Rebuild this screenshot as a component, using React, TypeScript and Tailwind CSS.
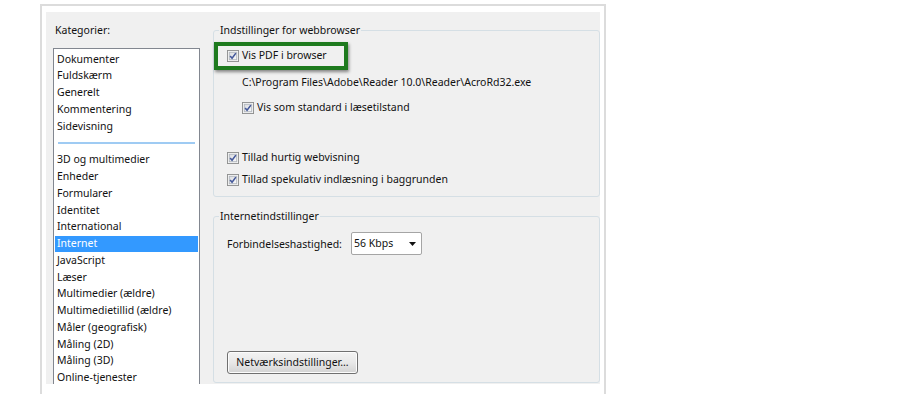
import React from 'react';

const FIRST = ['Dokumenter', 'Fuldskærm', 'Generelt', 'Kommentering', 'Sidevisning'];
const SECOND = [
  '3D og multimedier',
  'Enheder',
  'Formularer',
  'Identitet',
  'International',
  'Internet',
  'JavaScript',
  'Læser',
  'Multimedier (ældre)',
  'Multimedietillid (ældre)',
  'Måler (geografisk)',
  'Måling (2D)',
  'Måling (3D)',
  'Online-tjenester',
];

const Checkbox: React.FC = () => (
  <svg width="12" height="12" viewBox="0 0 13 13" className="shrink-0">
    <defs>
      <linearGradient id="cbfill" x1="0" y1="0" x2="1" y2="1">
        <stop offset="0" stopColor="#d8dade" />
        <stop offset="1" stopColor="#fbfbfb" />
      </linearGradient>
    </defs>
    <rect x="0.5" y="0.5" width="12" height="12" fill="#f5f5f5" stroke="#8e8f8f" />
    <rect x="2.5" y="2.5" width="8" height="8" fill="url(#cbfill)" stroke="#b3b8bf" />
    <path d="M3.4 6.4 L5.5 9 L9.6 3.4" fill="none" stroke="#44589a" strokeWidth="1.7" />
  </svg>
);

const CheckRow: React.FC<{ label: string; indent: string; className?: string }> = ({ label, indent, className }) => (
  <div className={`flex items-center gap-[2px] h-[16px] ${indent} ${className ?? ''}`}>
    <Checkbox />
    <span className="pl-[1px]">{label}</span>
  </div>
);

const App: React.FC = () => {
  return (
    <div className="w-[900px] h-[394px] bg-white overflow-hidden text-[10.5px] text-[#111] font-['Noto_Sans',sans-serif]">
      {/* outer frame */}
      <div className="ml-[40px] mt-[4px] w-[566px] h-[400px] border-t-2 border-x-2 border-[#dcdcdc] pl-[4px] pr-[4px] pt-[6px]">
        <div className="h-[372px] bg-[#f0f0f0] flex overflow-hidden">
          {/* categories */}
          <div className="w-[160px] shrink-0 pl-[7px] pt-[10px]">
            <div className="leading-[16px] h-[16px] pl-[2px]">Kategorier:</div>
            <div className="mt-[10px] w-[147px] h-[350px] bg-white border border-[#828790] pt-[2px]">
              {FIRST.map(item => (
                <div key={item} className="h-[16.75px] flex items-center pl-[3px]">{item}</div>
              ))}
              <div className="h-[17.2px] flex items-center px-[4px]">
                <div className="h-[2px] w-full bg-[#9fcbf3]" />
              </div>
              {SECOND.map(item => (
                <div
                  key={item}
                  className={`h-[16.75px] flex items-center ${
                    item === 'Internet' ? 'bg-[#3399ff] text-white mx-[1px] pl-[2px]' : 'pl-[3px]'
                  }`}
                >
                  {item}
                </div>
              ))}
            </div>
          </div>

          {/* settings */}
          <div className="flex-1 flex flex-col pl-[7px]">
            <fieldset className="mt-[10px] h-[175px] border border-[#d5dfe5] rounded-[3px]">
              <legend className="ml-[5px] px-[1px] leading-[16px]">Indstillinger for webbrowser</legend>
              <div className="pt-[10px]">
                <div className="relative">
                  <CheckRow label="Vis PDF i browser" indent="pl-[13px]" />
                  <div className="absolute left-0 top-[-6px] w-[134px] h-[28px] border-4 border-[#1e7a1e] shadow-[1px_2px_3px_rgba(0,0,0,0.45)]" />
                </div>
                <div className="mt-[10px] h-[16px] leading-[16px] pl-[28px] whitespace-nowrap">
                  C:\Program Files\Adobe\Reader 10.0\Reader\AcroRd32.exe
                </div>
                <CheckRow label="Vis som standard i læsetilstand" indent="pl-[28px]" className="mt-[10px]" />
                <CheckRow label="Tillad hurtig webvisning" indent="pl-[13px]" className="mt-[34px]" />
                <CheckRow label="Tillad spekulativ indlæsning i baggrunden" indent="pl-[13px]" className="mt-[6px]" />
              </div>
            </fieldset>

            <fieldset className="mt-[11px] h-[175px] border border-[#d5dfe5] rounded-[3px]">
              <legend className="ml-[5px] px-[1px] leading-[16px]">Internetindstillinger</legend>
              <div className="pt-[8px] pl-[13px]">
                <div className="flex items-center h-[23px]">
                  <span className="w-[124px] pt-[2px]">Forbindelseshastighed:</span>
                  <div className="w-[71px] h-[23px] bg-white border border-[#a5a5a5] rounded-[2px] flex items-center justify-between pl-[2px] pr-[5px]">
                    <span>56 Kbps</span>
                    <svg width="7" height="4" viewBox="0 0 7 4">
                      <path d="M0 0 H7 L3.5 4 Z" fill="#111" />
                    </svg>
                  </div>
                </div>
                <button className="mt-[96px] w-[131px] h-[23px] border border-[#707070] rounded-[3px] bg-gradient-to-b from-[#f3f3f3] via-[#e8e8e8] to-[#d3d3d3] shadow-[inset_0_0_0_1px_#fcfcfc] flex items-center justify-center text-[#111]">
                  Netværksindstillinger...
                </button>
              </div>
            </fieldset>
          </div>
        </div>
      </div>
    </div>
  );
};

export default App;
